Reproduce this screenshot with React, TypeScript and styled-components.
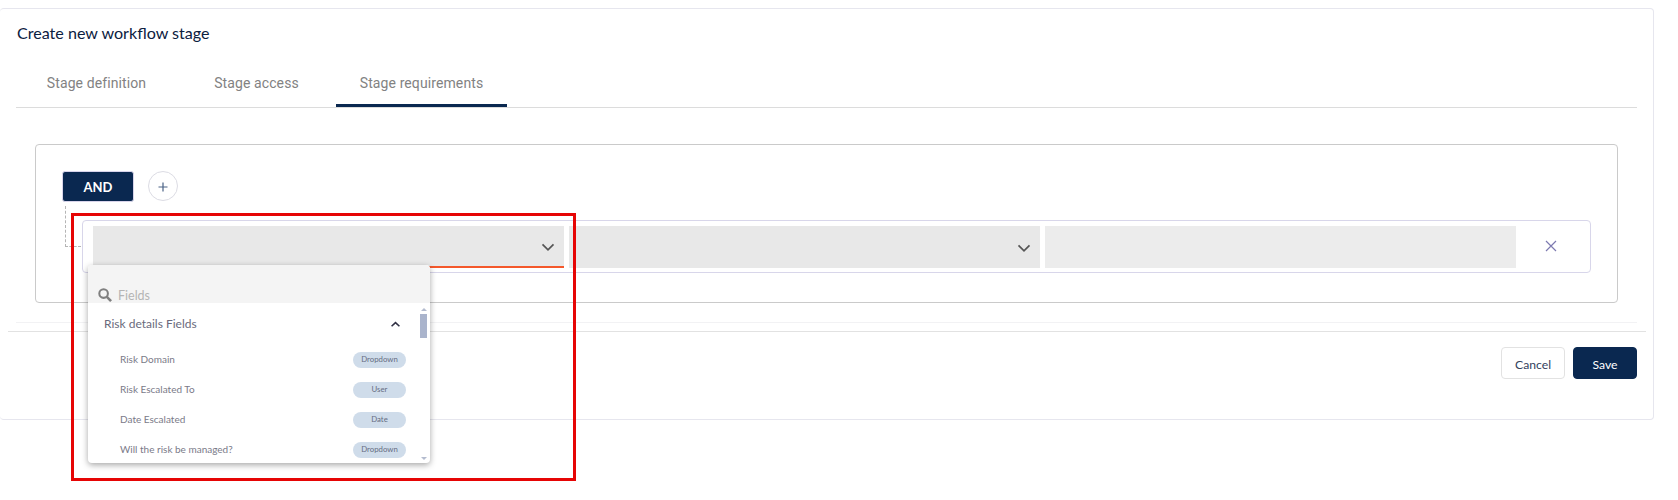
import React from "react";
import styled, { createGlobalStyle } from "styled-components";

const Global = createGlobalStyle`
  html, body { margin: 0; padding: 0; background: #fff; }
  #root { width: 1678px; height: 500px; position: relative; overflow: hidden; }
`;

const Page = styled.div`
  position: relative;
  width: 1678px;
  height: 500px;
  padding-top: 8px;
  box-sizing: border-box;
  background: #fff;
`;

const Card = styled.section`
  width: 1654px;
  height: 412px;
  box-sizing: border-box;
  border: 1px solid #e6e6ee;
  border-left: 0;
  border-radius: 4px;
  display: flex;
  flex-direction: column;
`;

const Title = styled.h2`
  margin: 0;
  height: 48px;
  padding: 15px 0 0 17px;
  box-sizing: border-box;
  font: 400 16.1px/18px Lato, sans-serif;
  color: #0b2040;
`;

const Tabs = styled.nav`
  margin: 0 16px;
  height: 50px;
  display: flex;
  border-bottom: 1px solid #dcdcdc;
`;

const Tab = styled.div<{ $active?: boolean; $w: number }>`
  width: ${(p) => p.$w}px;
  height: 50px;
  box-sizing: border-box;
  padding-top: 16px;
  text-align: center;
  font: 400 14px/20px Roboto, sans-serif;
  letter-spacing: 0.1px;
  color: #828282;
  border-bottom: ${(p) => (p.$active ? "3px solid #0a2850" : "0")};
  flex: none;
`;

const Body = styled.div`
  margin: 0 16px;
  height: 215px;
  box-sizing: border-box;
  padding: 36px 19px 0 19px;
  border-bottom: 1px solid #f2f2f4;
`;

const GroupBox = styled.div`
  height: 159px;
  box-sizing: border-box;
  border: 1px solid #cacaca;
  border-radius: 4px;
  padding: 26px 26px 0 26px;
`;

const GroupHead = styled.div`
  display: flex;
  align-items: flex-start;
  gap: 14px;
  height: 49px;
`;

const AndButton = styled.button`
  width: 72px;
  height: 31px;
  margin-top: 0;
  padding: 2px 0 0;
  border: 1px solid #d8d4ea;
  border-radius: 3px;
  background: #0a2850;
  color: #fff;
  font: 700 13px/27px Lato, sans-serif;
`;

const PlusButton = styled.button`
  width: 30px;
  height: 30px;
  padding: 1px 0 0;
  border: 1px solid #dcdce4;
  border-radius: 50%;
  background: #fff;
  display: flex;
  align-items: center;
  justify-content: center;
  color: #4a6285;
`;

const RuleRow = styled.div`
  position: relative;
  margin-left: 20px;
  height: 53px;
  box-sizing: border-box;
  border: 1px solid #d8d6ea;
  border-radius: 4px;
  padding: 5px 0 0 10px;
  display: flex;
  gap: 5px;
`;

const Connector = styled.span`
  position: absolute;
  left: -18px;
  top: -15px;
  width: 16px;
  height: 41px;
  box-sizing: border-box;
  border-left: 1px dashed #b5b5b5;
  border-bottom: 1px dashed #b5b5b5;
`;

const SelectField = styled.div<{ $focused?: boolean; $w: number }>`
  width: ${(p) => p.$w}px;
  height: 42px;
  box-sizing: border-box;
  background: #e8e8e8;
  border-bottom: ${(p) => (p.$focused ? "2px solid #f4582b" : "0")};
  display: flex;
  align-items: center;
  justify-content: flex-end;
  padding: 2px 9px 0 0;
  color: #555;
`;

const ValueField = styled.div`
  width: 471px;
  height: 42px;
  background: #ececec;
`;

const RemoveButton = styled.div`
  width: 59px;
  height: 42px;
  padding-bottom: 2px;
  box-sizing: border-box;
  display: flex;
  align-items: center;
  justify-content: center;
  color: #7d7ab0;
`;

const Footer = styled.footer`
  margin: 8px 7px 0 8px;
  border-top: 1px solid #e2e2e2;
  padding: 15px 9px 0 0;
  display: flex;
  justify-content: flex-end;
  gap: 8px;
`;

const FooterButton = styled.button<{ $primary?: boolean }>`
  width: 64px;
  height: 32px;
  padding: 4px 0 0;
  box-sizing: border-box;
  border-radius: 4px;
  border: 1px solid ${(p) => (p.$primary ? "#0a2850" : "#e2e2e2")};
  background: ${(p) => (p.$primary ? "#0a2850" : "#fff")};
  color: ${(p) => (p.$primary ? "#fff" : "#33415c")};
  font: 400 12.2px/26px Lato, sans-serif;
`;

const Annotation = styled.div`
  position: absolute;
  left: 71px;
  top: 213px;
  width: 505px;
  height: 268px;
  box-sizing: border-box;
  border: 3px solid #e60505;
  pointer-events: none;
  z-index: 3;
`;

const Dropdown = styled.div`
  position: absolute;
  left: 88px;
  top: 265px;
  width: 342px;
  height: 198px;
  background: #fff;
  border-radius: 4px;
  box-shadow: 0 2px 6px rgba(0, 0, 0, 0.35);
  overflow: hidden;
  z-index: 2;
  display: flex;
  flex-direction: column;
`;

const SearchBar = styled.div`
  height: 38px;
  flex: none;
  box-sizing: border-box;
  background: #f4f4f4;
  padding: 23px 0 0 10px;
  display: flex;
  align-items: flex-start;
  gap: 6px;
  color: #7f7f7f;
`;

const SearchLabel = styled.span`
  font: 400 12.5px/15px Lato, sans-serif;
  color: #b4b4b4;
`;

const ListArea = styled.div`
  flex: 1;
  display: flex;
  min-height: 0;
`;

const List = styled.div`
  flex: 1;
  min-width: 0;
`;

const GroupTitle = styled.div`
  height: 42px;
  box-sizing: border-box;
  padding: 0 18px 0 16px;
  display: flex;
  align-items: center;
  justify-content: space-between;
  font: 400 12px/18px Lato, sans-serif;
  color: #6a6a7c;
`;

const ChevronWrap = styled.span`
  color: #2f2f44;
  display: flex;
`;

const Item = styled.div`
  height: 30px;
  box-sizing: border-box;
  padding: 0 13px 0 32px;
  display: flex;
  align-items: center;
  justify-content: space-between;
  font: 400 10px/14px Lato, sans-serif;
  color: #7a7a88;
`;

const ItemName = styled.span`
  margin-bottom: 2px;
`;

const Badge = styled.span`
  width: 53px;
  height: 16px;
  border-radius: 8px;
  background: #cfdcea;
  text-align: center;
  font: 400 7.8px/15px Lato, sans-serif;
  color: #666c82;
`;

const Scrollbar = styled.div`
  width: 9px;
  margin-right: 2px;
  flex: none;
  display: flex;
  flex-direction: column;
  align-items: center;
  padding-top: 5px;
  box-sizing: border-box;
  height: 160px;
`;

const ScrollThumb = styled.div`
  width: 7px;
  height: 24px;
  margin-top: 3px;
  background: #aab4cc;
`;

const ScrollArrow = styled.span<{ $down?: boolean }>`
  width: 0;
  height: 0;
  border-left: 3px solid transparent;
  border-right: 3px solid transparent;
  ${(p) =>
    p.$down
      ? "border-top: 3px solid #b4bccf; margin-top: auto; margin-bottom: 3px;"
      : "border-bottom: 3px solid #b4bccf;"}
`;

const Chevron = ({ up, size = 14, width = 1.7 }: { up?: boolean; size?: number; width?: number }) => (
  <svg width={size} height={size} viewBox="0 0 14 14" fill="none" stroke="currentColor" strokeWidth={width}>
    <path d={up ? "M2 9.2 7 4.6l5 4.6" : "M1.5 4.3 7 9.8l5.5-5.5"} />
  </svg>
);

const items = [
  ["Risk Domain", "Dropdown"],
  ["Risk Escalated To", "User"],
  ["Date Escalated", "Date"],
  ["Will the risk be managed?", "Dropdown"],
];

export default function App() {
  return (
    <Page>
      <Global />
      <Card>
        <Title>Create new workflow stage</Title>
        <Tabs>
          <Tab $w={161}>Stage definition</Tab>
          <Tab $w={159}>Stage access</Tab>
          <Tab $w={171} $active>Stage requirements</Tab>
        </Tabs>
        <Body>
          <GroupBox>
            <GroupHead>
              <AndButton>AND</AndButton>
              <PlusButton>
                <svg width="10" height="10" viewBox="0 0 10 10" stroke="currentColor" strokeWidth="1.2">
                  <path d="M5 0.5v9M0.5 5h9" />
                </svg>
              </PlusButton>
            </GroupHead>
            <RuleRow>
              <Connector />
              <SelectField $w={471} $focused>
                <Chevron />
              </SelectField>
              <SelectField $w={471}>
                <Chevron />
              </SelectField>
              <ValueField />
              <RemoveButton>
                <svg width="12" height="12" viewBox="0 0 12 12" stroke="currentColor" strokeWidth="1.2">
                  <path d="M1 1l10 10M11 1 1 11" />
                </svg>
              </RemoveButton>
            </RuleRow>
          </GroupBox>
        </Body>
        <Footer>
          <FooterButton>Cancel</FooterButton>
          <FooterButton $primary>Save</FooterButton>
        </Footer>
      </Card>
      <Dropdown>
        <SearchBar>
          <svg width="14" height="14" viewBox="0 0 15 15" fill="none" stroke="currentColor">
            <circle cx="6" cy="6" r="4.6" strokeWidth="2.2" />
            <path d="M9.5 9.5 14 14" strokeWidth="2.8" />
          </svg>
          <SearchLabel>Fields</SearchLabel>
        </SearchBar>
        <ListArea>
          <List>
            <GroupTitle>
              Risk details Fields
              <ChevronWrap>
                <Chevron up size={11} width={2} />
              </ChevronWrap>
            </GroupTitle>
            {items.map(([name, kind]) => (
              <Item key={name}>
                <ItemName>{name}</ItemName>
                <Badge>{kind}</Badge>
              </Item>
            ))}
          </List>
          <Scrollbar>
            <ScrollArrow />
            <ScrollThumb />
            <ScrollArrow $down />
          </Scrollbar>
        </ListArea>
      </Dropdown>
      <Annotation />
    </Page>
  );
}
